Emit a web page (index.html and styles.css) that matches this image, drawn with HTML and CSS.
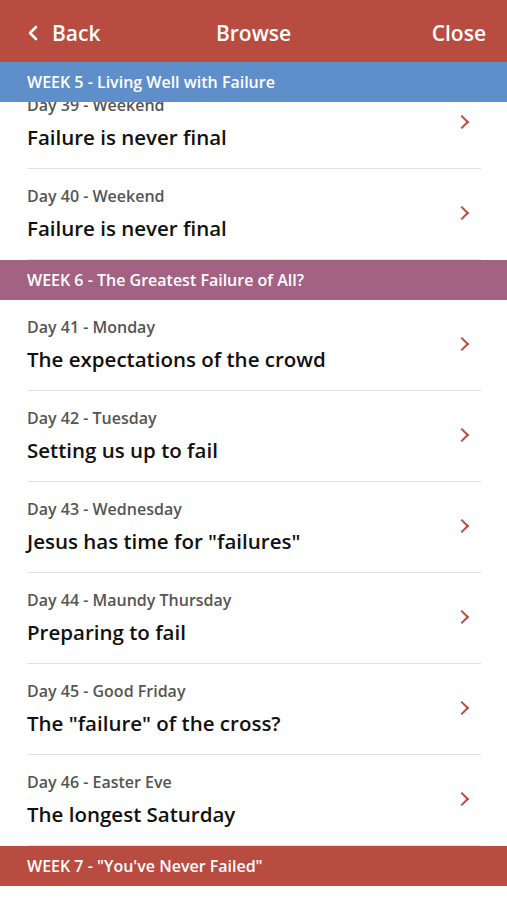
FILE: index.html
```html
<!DOCTYPE html>
<html lang="en">

<head>
    <meta charset="UTF-8" />
    <meta name="viewport" content="width=device-width, initial-scale=1.0" />
    <title>Browse</title>
    <link rel="stylesheet" href="styles.css">
</head>

<body>
    <header class="topbar">
        <a class="topbar-btn back" href="#">
            <svg class="back-icon" width="12" height="16" viewBox="0 0 12 16">
                <path d="M9 2 L3 8 L9 14" fill="none" stroke="#fff" stroke-width="2.6" stroke-linecap="round" stroke-linejoin="round" />
            </svg>
            Back
        </a>
        <span class="topbar-title">Browse</span>
        <a class="topbar-btn close" href="#">Close</a>
    </header>

    <div class="week week-blue">WEEK 5 - Living Well with Failure</div>

    <main class="list">
        <ul class="days first">
            <li class="day">
                <div class="day-text">
                    <div class="day-label">Day 39 - Weekend</div>
                    <div class="day-title">Failure is never final</div>
                </div>
                <span class="chev"></span>
            </li>
            <li class="day">
                <div class="day-text">
                    <div class="day-label">Day 40 - Weekend</div>
                    <div class="day-title">Failure is never final</div>
                </div>
                <span class="chev"></span>
            </li>
        </ul>

        <div class="week week-purple">WEEK 6 - The Greatest Failure of All?</div>

        <ul class="days">
            <li class="day">
                <div class="day-text">
                    <div class="day-label">Day 41 - Monday</div>
                    <div class="day-title">The expectations of the crowd</div>
                </div>
                <span class="chev"></span>
            </li>
            <li class="day">
                <div class="day-text">
                    <div class="day-label">Day 42 - Tuesday</div>
                    <div class="day-title">Setting us up to fail</div>
                </div>
                <span class="chev"></span>
            </li>
            <li class="day">
                <div class="day-text">
                    <div class="day-label">Day 43 - Wednesday</div>
                    <div class="day-title">Jesus has time for "failures"</div>
                </div>
                <span class="chev"></span>
            </li>
            <li class="day">
                <div class="day-text">
                    <div class="day-label">Day 44 - Maundy Thursday</div>
                    <div class="day-title">Preparing to fail</div>
                </div>
                <span class="chev"></span>
            </li>
            <li class="day">
                <div class="day-text">
                    <div class="day-label">Day 45 - Good Friday</div>
                    <div class="day-title">The "failure" of the cross?</div>
                </div>
                <span class="chev"></span>
            </li>
            <li class="day">
                <div class="day-text">
                    <div class="day-label">Day 46 - Easter Eve</div>
                    <div class="day-title">The longest Saturday</div>
                </div>
                <span class="chev"></span>
            </li>
        </ul>

        <div class="week week-red">WEEK 7 - "You've Never Failed"</div>
    </main>
</body>

</html>
```

FILE: styles.css
```css
body {
    font-family: 'Open Sans', 'Noto Sans', sans-serif;
    margin: 0;
    padding: 0;
    background-color: #ffffff;
    color: #111;
    height: 900px;
    overflow: hidden;
}

.topbar {
    height: 62px;
    box-sizing: border-box;
    padding: 3px 21px 0 27px;
    background-color: #b84c41;
    color: #fff;
    display: flex;
    align-items: center;
    justify-content: space-between;
    position: relative;
}

.topbar-btn {
    color: #fff;
    text-decoration: none;
    font-size: 21px;
    font-weight: 600;
    display: flex;
    align-items: center;
}

.back-icon {
    margin-right: 13px;
}

.topbar-title {
    position: absolute;
    left: 0;
    right: 0;
    text-align: center;
    font-size: 21px;
    font-weight: 600;
    pointer-events: none;
}

.week {
    height: 40px;
    line-height: 40px;
    padding-left: 27px;
    color: #fff;
    font-size: 16px;
    font-weight: 600;
}

.week-blue {
    background-color: #5f8fca;
    position: relative;
    z-index: 1;
}

.week-purple {
    background-color: #a36283;
}

.week-red {
    background-color: #b84c41;
}

.list {
    overflow: hidden;
}

.days {
    list-style: none;
    margin: 0;
    padding: 0 26px 0 27px;
}

/* list is scrolled: first row tucks under the week 5 bar */
.days.first {
    margin-top: -24px;
}

.day {
    display: flex;
    align-items: center;
    justify-content: space-between;
    padding: 17px 0 17px;
    border-bottom: 1px solid #e0e0e0;
}

.day-label {
    font-size: 16px;
    line-height: 20px;
    font-weight: 600;
    color: #555;
}

.day-title {
    font-size: 20.5px;
    line-height: 28px;
    font-weight: 600;
    margin-top: 8px;
    color: #111;
}

.chev {
    width: 8px;
    height: 8px;
    border-top: 2.5px solid #b84c41;
    border-right: 2.5px solid #b84c41;
    transform: rotate(45deg);
    margin-right: 14px;
    margin-top: -2px;
}
```
